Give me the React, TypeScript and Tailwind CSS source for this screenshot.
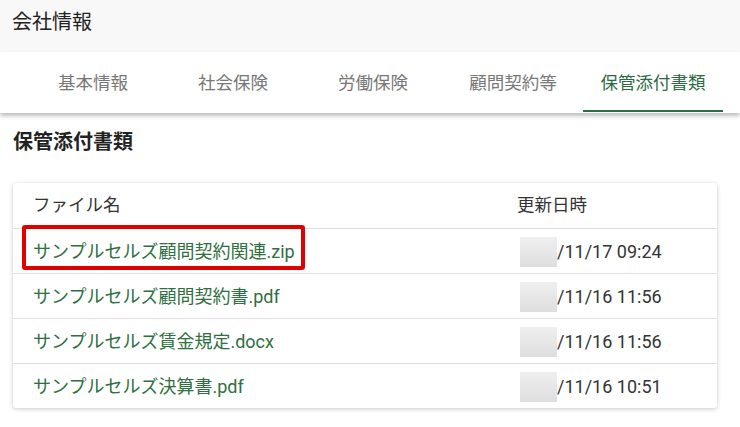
import React from "react";

const tabs = ["基本情報", "社会保険", "労働保険", "顧問契約等", "保管添付書類"];

const files = [
  { name: "サンプルセルズ顧問契約関連.zip", date: "/11/17 09:24", highlight: true },
  { name: "サンプルセルズ顧問契約書.pdf", date: "/11/16 11:56" },
  { name: "サンプルセルズ賃金規定.docx", date: "/11/16 11:56" },
  { name: "サンプルセルズ決算書.pdf", date: "/11/16 10:51" },
];

export default function App() {
  return (
    <div
      className="w-[740px] h-[427px] bg-white overflow-hidden"
      style={{ fontFamily: 'Roboto, "Noto Sans CJK JP", sans-serif' }}
    >
      {/* ヘッダー */}
      <div className="h-[52px] bg-[#f8f8f8] px-[12px] flex items-center pb-[8px]">
        <h1 className="text-[20px] text-[#222] leading-[28px]">会社情報</h1>
      </div>

      {/* タブ */}
      <div className="h-[61px] bg-white flex pl-[23px] shadow-[0_3px_4px_rgba(0,0,0,0.25)] relative z-10">
        {tabs.map((t, i) => {
          const active = i === tabs.length - 1;
          return (
            <div
              key={t}
              className={`w-[140px] flex items-center justify-center text-[17.5px] relative ${
                active ? "text-[#2e6b45]" : "text-[#777]"
              }`}
            >
              <span className="pt-[1px]">{t}</span>
              {active && <div className="absolute left-0 right-0 bottom-[1px] h-[2px] bg-[#2e6b45]" />}
            </div>
          );
        })}
      </div>

      {/* 保管添付書類 */}
      <div className="px-[13px]">
        <h2 className="text-[20px] font-bold text-[#222] mt-[15px] leading-[28px]">保管添付書類</h2>

        <div className="mt-[27px] w-[704px] rounded-[3px] bg-white shadow-[0_1px_4px_rgba(0,0,0,0.22)]">
          <div className="h-[45px] flex items-center text-[17.5px] text-[#333]">
            <div className="w-[484px] pl-[20px]">ファイル名</div>
            <div className="pl-[20px]">更新日時</div>
          </div>
          {files.map((f) => (
            <div key={f.name} className="h-[45px] flex items-center border-t border-[#e0e0e0] text-[18px] relative">
              <div className="w-[484px] pl-[20px]">
                <span className="text-[#2e7040]">{f.name}</span>
              </div>
              <div className="pl-[23px] flex items-center text-[#333]">
                <div className="w-[37px] h-[30px] bg-gradient-to-b from-[#efefef] to-[#dedede] mt-[2px]" />
                <span>{f.date}</span>
              </div>
              {f.highlight && (
                <div className="absolute left-[9px] top-[-4px] w-[283px] h-[45px] border-[4px] border-[#e00000] rounded-[3px]" />
              )}
            </div>
          ))}
        </div>
      </div>
    </div>
  );
}
